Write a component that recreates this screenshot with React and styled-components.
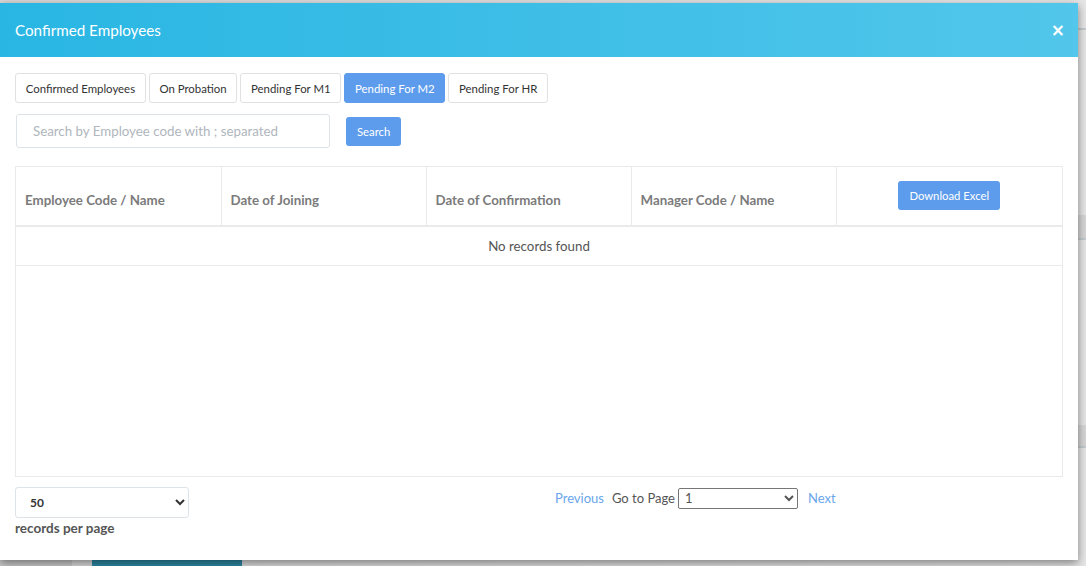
import React from 'react';
import styled, { createGlobalStyle } from 'styled-components';

const GlobalStyle = createGlobalStyle`
  html, body {
    margin: 0;
    padding: 0;
    background: #e2e2e2;
    font-family: Lato, "Noto Sans", sans-serif;
  }
  * { box-sizing: border-box; }
`;

const Page = styled.div`
  position: relative;
  width: 1086px;
  height: 566px;
  overflow: hidden;
  background: linear-gradient(90deg, #d8d8d8 0%, #e6e6e6 100%);
`;

/* things of the page under the backdrop, only slivers show */
const Behind = styled.div`
  position: absolute;
  left: 0;
  top: 0;
  width: 1086px;
  height: 566px;
`;

const BehindLine = styled.div`
  position: absolute;
  left: 1078px;
  right: 0;
  top: ${(p) => p.top}px;
  height: ${(p) => p.h}px;
  background: ${(p) => p.color};
`;

const BehindButton = styled.div`
  position: absolute;
  left: 92px;
  top: 548px;
  width: 150px;
  height: 40px;
  background: #2c88a3;
`;

const BehindBar = styled.div`
  position: absolute;
  left: 0;
  top: 548px;
  width: 72px;
  height: 30px;
  background: #c9c9c9;
`;

const Modal = styled.div`
  position: relative;
  margin-top: 3px;
  width: 1078px;
  height: 557px;
  background: #fff;
  box-shadow: 0 3px 9px rgba(0, 0, 0, 0.45);
  display: flex;
  flex-direction: column;
`;

const Header = styled.div`
  height: 54px;
  padding: 0 14px 0 15px;
  display: flex;
  align-items: center;
  justify-content: space-between;
  background: linear-gradient(90deg, #29b6e3 0%, #52c6eb 100%);
  color: #fff;
`;

const Title = styled.h4`
  margin: 0;
  font-size: 15.2px;
  font-weight: 400;
`;

const Close = styled.span`
  font-size: 17px;
  font-weight: 700;
  line-height: 1;
  margin-right: -1px;
  font-family: "DejaVu Sans", sans-serif;
`;

const Body = styled.div`
  flex: 1;
  padding: 16px 15px 0 15px;
  display: flex;
  flex-direction: column;
`;

const Tabs = styled.div`
  display: flex;
  gap: 3px;
`;

const Tab = styled.button`
  height: 30px;
  padding: 0 9.7px;
  border: 1px solid ${(p) => (p.active ? '#5d9cec' : '#e1e1e1')};
  border-radius: 3px;
  background: ${(p) => (p.active ? '#5d9cec' : '#fff')};
  color: ${(p) => (p.active ? '#fff' : '#333')};
  font-family: Lato, "Noto Sans", sans-serif;
  font-size: 11.4px;
`;

const SearchRow = styled.div`
  display: flex;
  align-items: center;
  gap: 16px;
  margin-top: 11px;
  padding-left: 1px;
`;

const SearchInput = styled.input`
  width: 314px;
  height: 34px;
  padding: 0 16px;
  border: 1px solid #dde3e8;
  border-radius: 3px;
  font-family: Lato, "Noto Sans", sans-serif;
  font-size: 13.3px;
  outline: none;
  &::placeholder { color: #b0b6bd; }
`;

const BlueButton = styled.button`
  height: 29px;
  padding: 0 11px;
  border: none;
  border-radius: 3px;
  background: #5d9cec;
  color: #fff;
  font-family: Lato, "Noto Sans", sans-serif;
  font-size: 11.3px;
`;

const TableBox = styled.div`
  margin-top: 18px;
  height: 311px;
  border: 1px solid #eaeaea;
`;

const Table = styled.table`
  width: 100%;
  border-collapse: collapse;
  table-layout: fixed;
`;

const Th = styled.th`
  height: 59px;
  padding: 7px 9px 0 9px;
  text-align: ${(p) => (p.center ? 'center' : 'left')};
  vertical-align: ${(p) => (p.center ? 'top' : 'middle')};
  font-size: 13.3px;
  font-weight: 700;
  color: #7b7b7b;
  border-right: 1px solid #eaeaea;
  border-bottom: 2px solid #eaeaea;
  &:last-child { border-right: none; padding-top: 14px; }
`;

const Td = styled.td`
  height: 39px;
  text-align: center;
  font-size: 13.3px;
  color: #555;
  border-bottom: 1px solid #eaeaea;
`;

const Footer = styled.div`
  display: grid;
  grid-template-columns: 540px auto;
  margin-top: 10px;
`;

const PerPage = styled.div`
  display: flex;
  flex-direction: column;
  gap: 2px;
`;

const PerPageSelect = styled.select`
  width: 174px;
  height: 31px;
  padding: 0 10px;
  border: 1px solid #dde3e8;
  border-radius: 3px;
  background: #fff;
  font-family: Lato, "Noto Sans", sans-serif;
  font-size: 12px;
  font-weight: 700;
  color: #333;
`;

const PerPageLabel = styled.span`
  font-size: 13.5px;
  font-weight: 700;
  color: #555;
`;

const Pager = styled.div`
  display: flex;
  align-items: center;
  height: 22px;
  font-size: 13px;
  color: #555;
`;

const PagerLink = styled.a`
  color: #6aa6ec;
  text-decoration: none;
  margin: ${(p) => p.m};
`;

const PageSelect = styled.select`
  width: 120px;
  height: 21px;
  margin-left: 3px;
  padding: 0 2px;
  border: 1px solid #767676;
  border-radius: 2px;
  background: #fff;
  font-family: Lato, "Noto Sans", sans-serif;
  font-size: 13px;
  color: #555;
`;

const tabs = ['Confirmed Employees', 'On Probation', 'Pending For M1', 'Pending For M2', 'Pending For HR'];
const cols = ['Employee Code / Name', 'Date of Joining', 'Date of Confirmation', 'Manager Code / Name'];

export default function App() {
  return (
    <Page>
      <GlobalStyle />
      <Behind>
        <BehindLine top={28} h={2} color="#c3cbcf" />
        <BehindLine top={215} h={24} color="#d6d6d6" />
        <BehindLine top={238} h={2} color="#c3cbcf" />
        <BehindLine top={425} h={22} color="#d6d6d6" />
        <BehindLine top={446} h={2} color="#c3cbcf" />
        <BehindBar />
        <BehindButton />
      </Behind>
      <Modal>
        <Header>
          <Title>Confirmed Employees</Title>
          <Close>×</Close>
        </Header>
        <Body>
          <Tabs>
            {tabs.map((t) => (
              <Tab key={t} active={t === 'Pending For M2'}>{t}</Tab>
            ))}
          </Tabs>
          <SearchRow>
            <SearchInput placeholder="Search by Employee code with ; separated" />
            <BlueButton>Search</BlueButton>
          </SearchRow>
          <TableBox>
            <Table>
              <colgroup>
                <col style={{ width: '205px' }} />
                <col style={{ width: '205px' }} />
                <col style={{ width: '205px' }} />
                <col style={{ width: '205px' }} />
                <col />
              </colgroup>
              <thead>
                <tr>
                  {cols.map((c) => <Th key={c}>{c}</Th>)}
                  <Th center><BlueButton>Download Excel</BlueButton></Th>
                </tr>
              </thead>
              <tbody>
                <tr>
                  <Td colSpan={5}>No records found</Td>
                </tr>
              </tbody>
            </Table>
          </TableBox>
          <Footer>
            <PerPage>
              <PerPageSelect defaultValue="50">
                <option value="50">50</option>
              </PerPageSelect>
              <PerPageLabel>records per page</PerPageLabel>
            </PerPage>
            <Pager>
              <PagerLink m="0 8px 0 0">Previous</PagerLink>
              Go to Page
              <PageSelect defaultValue="1">
                <option value="1">1</option>
              </PageSelect>
              <PagerLink m="0 0 0 10px">Next</PagerLink>
            </Pager>
          </Footer>
        </Body>
      </Modal>
    </Page>
  );
}
